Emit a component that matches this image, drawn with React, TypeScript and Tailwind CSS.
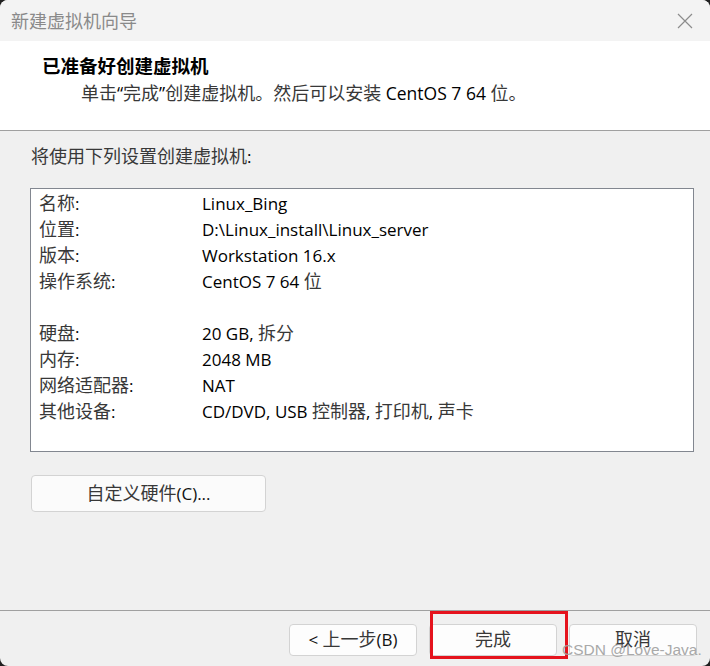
import React from "react";

const FONT = { fontFamily: '"Open Sans","Noto Sans CJK SC",sans-serif' };
const CJK_FONT = { fontFamily: '"Noto Sans CJK SC",sans-serif' };

function Mixed({ text }: { text: string }) {
  const parts = text.split(/([\u4e00-\u9fff\u3000-\u303f]+)/);
  return (
    <span>
      {parts.map((p, i) =>
        /[\u4e00-\u9fff\u3000-\u303f]/.test(p) ? (
          <span key={i} className="text-[18px] leading-none text-[#383838]" style={CJK_FONT}>
            {p}
          </span>
        ) : (
          <span key={i}>{p}</span>
        )
      )}
    </span>
  );
}

const rows: [string, string][] = [
  ["名称:", "Linux_Bing"],
  ["位置:", "D:\\Linux_install\\Linux_server"],
  ["版本:", "Workstation 16.x"],
  ["操作系统:", "CentOS 7 64 位"],
  ["", ""],
  ["硬盘:", "20 GB, 拆分"],
  ["内存:", "2048 MB"],
  ["网络适配器:", "NAT"],
  ["其他设备:", "CD/DVD, USB 控制器, 打印机, 声卡"],
];

function Btn({ text }: { text: string }) {
  return (
    <button className="w-[128px] h-[32px] rounded-[4px] border border-[#d3d3d3] bg-[#fdfdfd] text-[17px] leading-[30px] text-[#111] text-center whitespace-pre">
      <Mixed text={text} />
    </button>
  );
}

export default function App() {
  return (
    <div className="w-[710px] h-[666px] bg-[#202020]" style={FONT}>
      <div className="relative w-[710px] h-[666px] rounded-[8px] overflow-hidden bg-[#f0f0f0] flex flex-col">
        {/* title bar */}
        <div className="h-[41px] bg-[#f3f3f3] flex items-center justify-between pl-[11px] pr-[17px]">
          <span className="text-[18px] text-[#8a8a8a] leading-none">新建虚拟机向导</span>
          <svg width="16" height="16" viewBox="0 0 16 16" className="shrink-0">
            <path d="M1 1 L15 15 M15 1 L1 15" stroke="#8c8c8c" strokeWidth="1.2" />
          </svg>
        </div>
        {/* header */}
        <div className="h-[90px] bg-white border-b border-[#a0a0a0] pt-[12px]">
          <div className="pl-[42px] h-[26px] leading-[26px] text-[18.5px] font-bold text-black">已准备好创建虚拟机</div>
          <div className="pl-[81px] h-[28px] leading-[28px] text-[17.5px] text-black whitespace-nowrap">
            <Mixed text="单击“完成”创建虚拟机。然后可以安装 CentOS 7 64 位。" />
          </div>
        </div>
        {/* body */}
        <div className="flex-1 flex flex-col pt-[13px] pl-[30px] pr-[17px]">
          <div className="h-[26px] leading-[26px] pl-[1px] text-[17px] text-black">
            <Mixed text="将使用下列设置创建虚拟机:" />
          </div>
          <div className="mt-[18px] h-[264px] w-[664px] bg-white border border-[#828790] pt-[2px] pl-[8px]">
            {rows.map(([k, v], i) => (
              <div key={i} className="h-[26px] leading-[26px] flex text-[17px] text-black whitespace-nowrap">
                <span className="w-[163px]">
                  <Mixed text={k} />
                </span>
                <span>
                  <Mixed text={v} />
                </span>
              </div>
            ))}
          </div>
          <button className="mt-[23px] ml-[1px] w-[235px] h-[37px] rounded-[4px] border border-[#d3d3d3] bg-[#fbfbfb] text-[17px] leading-[35px] text-[#111] text-center">
            <Mixed text="自定义硬件(C)..." />
          </button>
        </div>
        {/* footer */}
        <div className="h-[56px] border-t border-[#a0a0a0] flex justify-end gap-[12px] pt-[13px] pr-[13px]">
          <Btn text="< 上一步(B)" />
          <Btn text="完成" />
          <Btn text="取消" />
        </div>
        {/* red highlight */}
        <div className="absolute left-[430px] top-[611px] w-[138px] h-[48px] border-[3px] border-[#e5131d]" />
        {/* watermark */}
        <div
          className="absolute left-[562px] top-[640px] text-[15.5px] leading-[20px] text-[#a0a0a0] opacity-90"
          style={{ fontFamily: '"Liberation Sans",sans-serif' }}
        >
          CSDN @Love-Java.
        </div>
      </div>
    </div>
  );
}
